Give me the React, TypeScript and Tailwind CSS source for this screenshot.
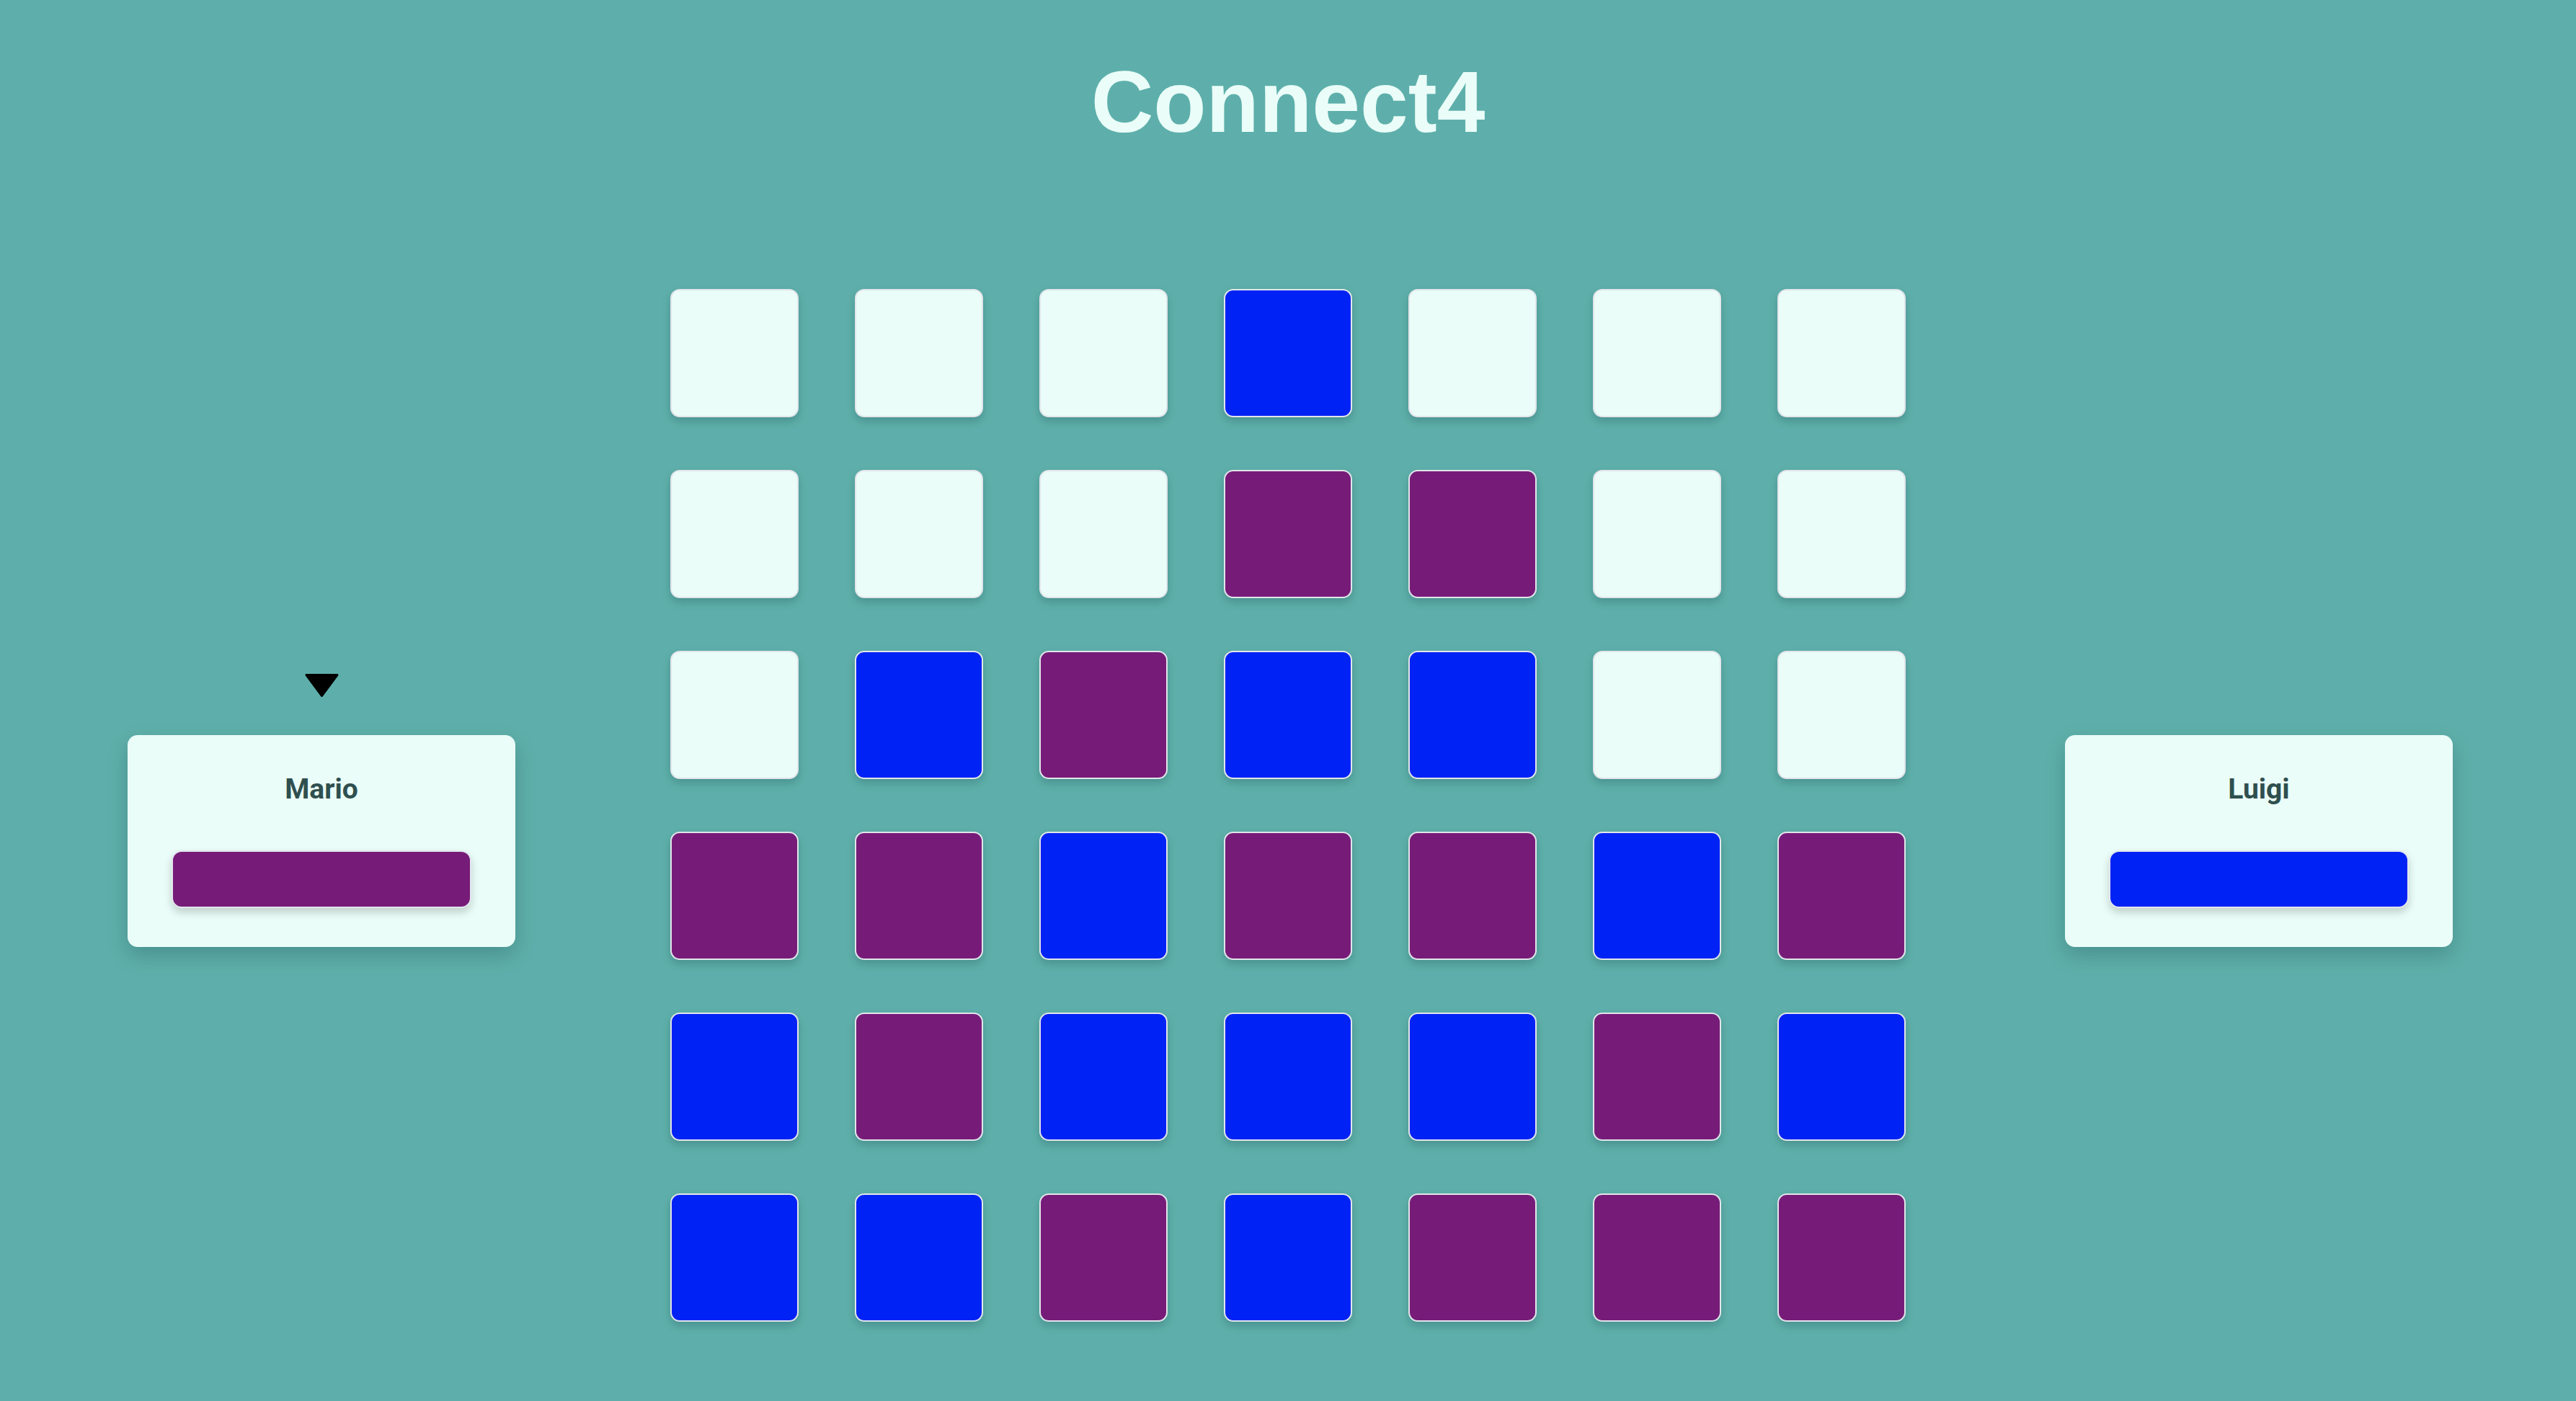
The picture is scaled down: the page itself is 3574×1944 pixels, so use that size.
import React, { FC } from "react";

type Cell = "E" | "B" | "P";

// board state, top row first
const board: Cell[][] = [
    ["E", "E", "E", "B", "E", "E", "E"],
    ["E", "E", "E", "P", "P", "E", "E"],
    ["E", "B", "P", "B", "B", "E", "E"],
    ["P", "P", "B", "P", "P", "B", "P"],
    ["B", "P", "B", "B", "B", "P", "B"],
    ["B", "B", "P", "B", "P", "P", "P"],
];

const cellColor: Record<Cell, string> = {
    E: "bg-[#eafdf8]",
    B: "bg-[#0022f5]",
    P: "bg-[#761c78]",
};

type PlayerCardProps = {
    name: string;
    color: string;
    active: boolean;
};

const PlayerCard: FC<PlayerCardProps> = ({ name, color, active }) => {
    return (
        <div className="flex flex-col items-center pt-[13px]">
            <svg
                width="49"
                height="34"
                viewBox="0 0 49 34"
                className={active ? "mb-[52px]" : "mb-[52px] invisible"}
            >
                <path
                    d="M3 2.5 H46 L24.5 31.5 Z"
                    fill="#000"
                    stroke="#000"
                    strokeWidth="3"
                    strokeLinejoin="round"
                />
            </svg>
            <div className="w-[538px] rounded-[14px] bg-[#eafdf8] px-[61px] pt-[56px] pb-[54px] shadow-[0_12px_28px_rgba(0,40,40,0.22)] flex flex-col items-center">
                <div className="font-['Roboto',sans-serif] text-[39px] leading-none font-bold text-[#2f4f4f]">
                    {name}
                </div>
                <div
                    className={`mt-[65px] w-full h-[80px] rounded-[14px] border-2 border-[#e3e6ee] shadow-[0_6px_12px_rgba(0,0,0,0.18)] ${color}`}
                />
            </div>
        </div>
    );
};

const App: FC = () => {
    return (
        <div className="min-h-screen w-full bg-[#5eafab] font-['Liberation_Sans',Arial,sans-serif]">
            <h1 className="pt-[81px] text-center text-[120px] leading-none font-bold text-[#eafdf8]">
                Connect4
            </h1>

            <div className="mt-[200px] flex justify-center items-center pl-[6px]">
                <div className="mr-[215px]">
                    <PlayerCard name="Mario" color="bg-[#761c78]" active={true} />
                </div>

                <div className="grid grid-cols-7 gap-x-[78px] gap-y-[73px]">
                    {board.map((row, r) =>
                        row.map((cell, c) => (
                            <div
                                key={`${r}-${c}`}
                                className={`w-[178px] h-[178px] rounded-[13px] border-2 border-[#e2e5ea] shadow-[0_6px_12px_rgba(0,50,50,0.22)] ${cellColor[cell]}`}
                            />
                        ))
                    )}
                </div>

                <div className="ml-[221px]">
                    <PlayerCard name="Luigi" color="bg-[#0022f5]" active={false} />
                </div>
            </div>
        </div>
    );
};

export default App;
